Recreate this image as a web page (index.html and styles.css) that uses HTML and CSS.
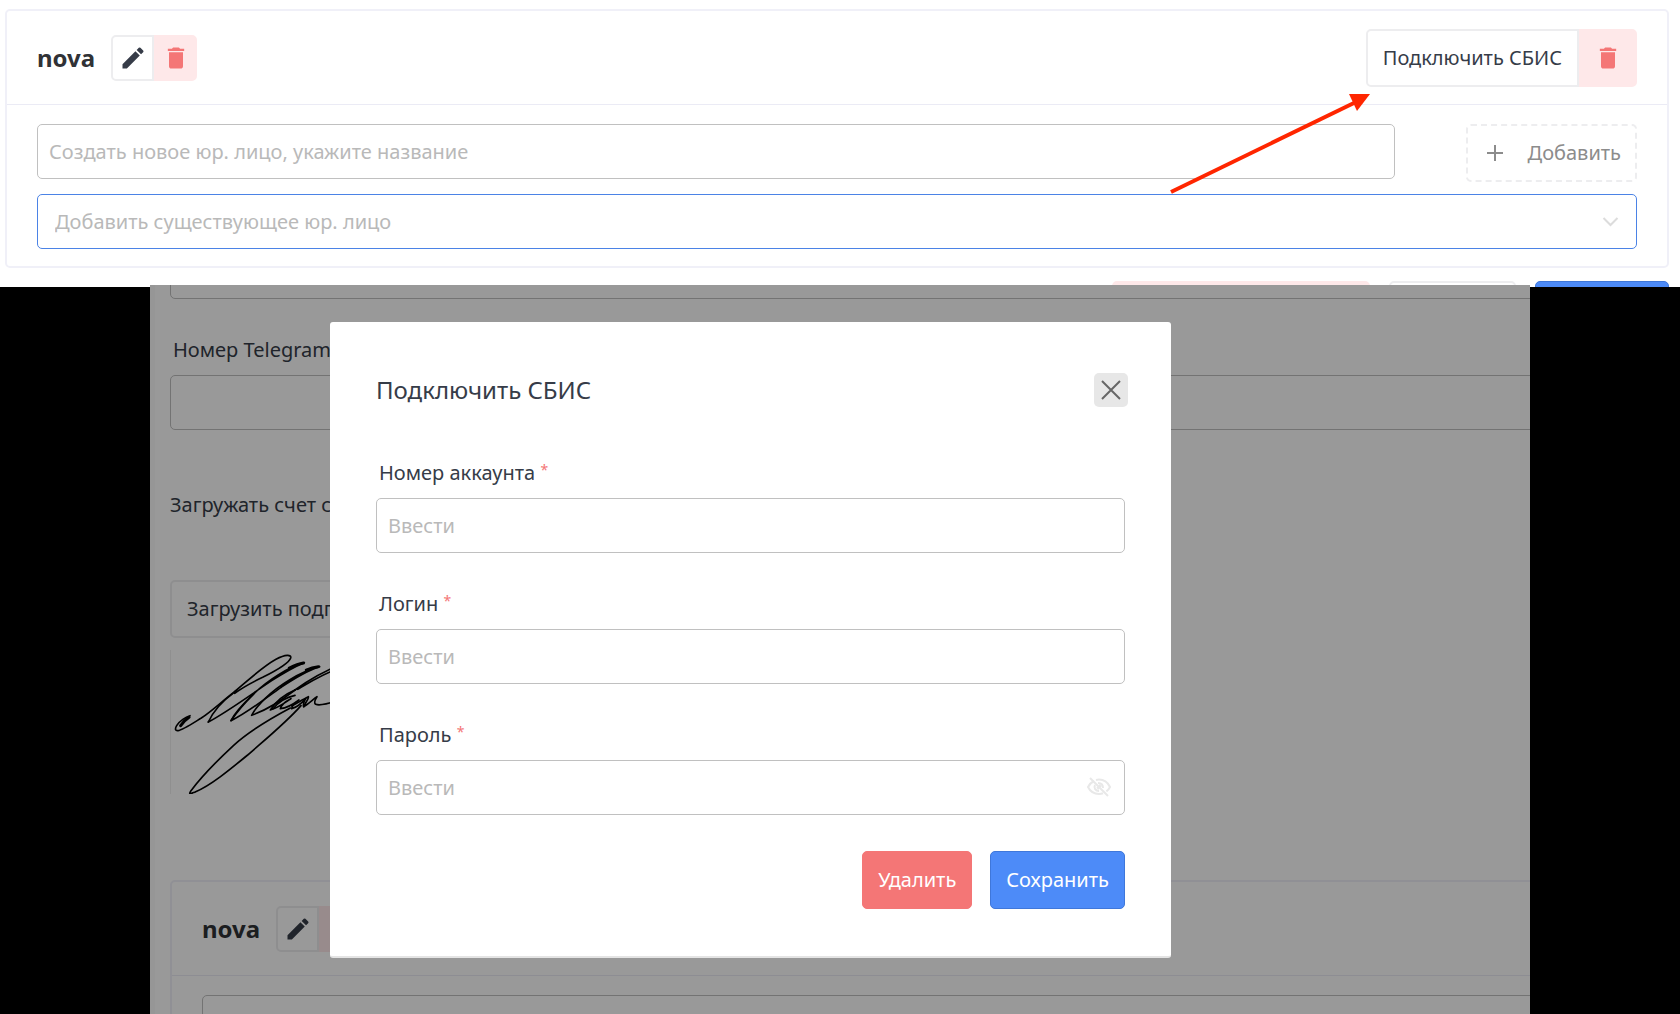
FILE: index.html
```html
<!DOCTYPE html>
<html lang="ru">
<head>
    <meta charset="UTF-8">
    <meta name="viewport" content="width=device-width, initial-scale=1.0">
    <title>Подключить СБИС</title>
    <link rel="stylesheet" href="styles.css">
</head>
<body>
    <!-- Shared icons -->
    <svg class="sprite" aria-hidden="true">
        <symbol id="pencil" viewBox="0 0 24 24">
            <path d="M3 17.25V21h3.75L17.81 9.94l-3.75-3.75L3 17.25zM20.71 7.04a1 1 0 0 0 0-1.41l-2.34-2.34a1 1 0 0 0-1.41 0l-1.83 1.83 3.75 3.75 1.83-1.83z"/>
        </symbol>
        <symbol id="trash" viewBox="0 0 24 24">
            <path d="M6 19c0 1.1.9 2 2 2h8c1.1 0 2-.9 2-2V7H6v12zM19 4h-3.5l-1-1h-5l-1 1H5v2h14V4z"/>
        </symbol>
    </svg>

    <main class="panel">
        <section class="card">
            <header class="card-header">
                <h2>nova</h2>
                <div class="btn-group">
                    <button type="button" class="btn-icon" aria-label="Изменить"><svg><use href="#pencil"/></svg></button>
                    <button type="button" class="btn-icon danger" aria-label="Удалить"><svg><use href="#trash"/></svg></button>
                </div>
                <div class="btn-group right">
                    <button type="button" class="btn">Подключить СБИС</button>
                    <button type="button" class="btn btn-trash danger" aria-label="Отключить СБИС"><svg><use href="#trash"/></svg></button>
                </div>
            </header>
            <div class="card-body">
                <div class="add-row">
                    <input type="text" class="input" aria-label="Новое юр. лицо" placeholder="Создать новое юр. лицо, укажите название">
                    <button type="button" class="btn btn-dashed">
                        <svg viewBox="0 0 18 18"><path d="M9 1v16M1 9h16"/></svg>
                        Добавить
                    </button>
                </div>
                <div class="select-wrap">
                    <select class="input" aria-label="Существующее юр. лицо">
                        <option>Добавить существующее юр. лицо</option>
                    </select>
                    <svg class="chevron" viewBox="0 0 16 10"><path d="M1 1l7 7 7-7"/></svg>
                </div>
            </div>
        </section>
        <footer class="panel-footer">
            <button type="button" class="btn btn-wide danger" aria-label="Удалить"></button>
            <button type="button" class="btn btn-cancel" aria-label="Отмена"></button>
            <button type="button" class="btn btn-primary btn-ok" aria-label="Сохранить"></button>
        </footer>
        <svg class="arrow" viewBox="0 0 204 104" aria-hidden="true">
            <path class="line" d="M3 99L188 9"/>
            <path class="head" d="M181 1h21l-13 17z"/>
        </svg>
    </main>

    <div class="stage">
        <div class="page">
            <input type="text" class="input cut" aria-label="Телефон">
            <div class="field">
                <label for="telegram">Номер Telegram</label>
                <input type="text" class="input" id="telegram">
            </div>
            <p class="note">Загружать счет с подписью</p>
            <button type="button" class="btn">Загрузить подпись</button>
            <div class="signature">
                <svg viewBox="90 270 540 432">
                    <path d="M147 467c-12 4-32 16-40 30-6 10-4 16 4 15 14-2 44-22 70-38 30-20 60-48 96-76 30-24 84-76 128-100 28-15 47-15 44-4-5 16-48 40-84 58-36 17-62 32-84 48"/>
                    <path d="M202 486c14-30 38-60 74-86"/>
                    <path d="M202 486c60-32 130-84 190-124 34-22 64-40 98-54-48 14-110 52-154 96-26 26-48 52-66 78 50-24 102-66 150-100"/>
                    <path d="M270 482c10-20 34-48 66-78"/>
                    <path d="M420 382c36-24 78-50 116-62-60 16-124 56-164 96-20 20-34 36-40 50 40-14 86-42 130-76"/>
                    <path d="M462 390c34-26 80-54 150-82M470 388c40-24 74-46 140-70"/>
                    <path d="M462 390c-34 14-56 32-74 60 22-6 44-22 62-34-20 10-30 20-32 30 20-2 40-14 56-26-12 8-22 18-22 26 18-4 28-14 42-30-8 14-8 20-6 24"/>
                    <path d="M396 446c16-20 38-34 66-40"/>
                    <path d="M452 438c24-12 40-24 50-28 4 4-10 18-14 30 14-8 28-22 40-30-4 8-12 18-4 23 14 5 34-1 60-10"/>
                    <path d="M448 444c-60 32-120 66-170 112-54 50-104 104-128 136-10 16 2 8 14 3 44-18 100-64 156-110 62-54 118-100 160-148"/>
                    <path class="thick" d="M119 497c8-11 16-19 25-25M445 324c14-7 28-13 42-15M496 330c12-6 24-9 36-10"/>
                </svg>
            </div>
            <section class="card">
                <header class="card-header">
                    <h2>nova</h2>
                    <div class="btn-group">
                        <button type="button" class="btn-icon" aria-label="Изменить"><svg><use href="#pencil"/></svg></button>
                        <button type="button" class="btn-icon danger" aria-label="Удалить"><svg><use href="#trash"/></svg></button>
                    </div>
                </header>
                <div class="card-body">
                    <input type="text" class="input" aria-label="Новое юр. лицо">
                </div>
            </section>
        </div>

        <div class="overlay">
            <form class="modal" role="dialog" aria-labelledby="modalTitle">
                <header class="modal-header">
                    <h1 id="modalTitle">Подключить СБИС</h1>
                    <button type="button" class="close" aria-label="Закрыть">
                        <svg viewBox="0 0 20 20"><path d="M1 1l18 18M19 1L1 19"/></svg>
                    </button>
                </header>
                <div class="modal-body">
                    <div class="field">
                        <label for="account">Номер аккаунта <span class="required">*</span></label>
                        <input type="text" class="input" id="account" placeholder="Ввести">
                    </div>
                    <div class="field">
                        <label for="login">Логин <span class="required">*</span></label>
                        <input type="text" class="input" id="login" placeholder="Ввести">
                    </div>
                    <div class="field">
                        <label for="password">Пароль <span class="required">*</span></label>
                        <div class="password-wrap">
                            <input type="password" class="input" id="password" placeholder="Ввести">
                            <svg class="eye" viewBox="0 0 24 20">
                                <path d="M7 4C4 5.500 2 8 1 10c2 4 6 7 11 7 1.500 0 3-.3 4-.7M9 3c1-.3 2-.4 3-.4 5 0 9 3.400 11 7.400-.8 1.600-2 3.200-3.600 4.400"/>
                                <path d="M8 8c-1.500 3 .5 6 4 6M11 6c3 0 5 2 5 5M12 8l2 2M10 10l2 2"/>
                                <path d="M3 1l18 18"/>
                            </svg>
                        </div>
                    </div>
                    <div class="actions">
                        <button type="button" class="btn btn-delete">Удалить</button>
                        <button type="submit" class="btn btn-primary">Сохранить</button>
                    </div>
                </div>
            </form>
        </div>
    </div>
</body>
</html>
```
FILE: styles.css
```css
* {
    box-sizing: border-box;
}

body {
    margin: 0;
    height: 100vh;
    display: flex;
    flex-direction: column;
    overflow: hidden;
    background-color: #000;
    color: #363c48;
    font-family: "Noto Sans", "Open Sans", sans-serif;
    font-size: 20px;
    line-height: 30px;
}

h1, h2, p {
    margin: 0;
}

button, input, select {
    font: inherit;
    color: inherit;
    margin: 0;
}

.sprite {
    position: absolute;
    width: 0;
    height: 0;
}

/* Top panel */
.panel {
    position: relative;
    background-color: #fff;
    padding: 9px 11px 0 5px;
}

.card {
    border: 2px solid #f0f0f8;
    border-radius: 5px;
}

.card-header {
    display: flex;
    align-items: center;
    height: 94px;
    padding: 0 30px;
    border-bottom: 1px solid #ebebf5;
}

.card-header h2 {
    color: #303236;
    font-size: 24px;
    margin-right: 16px;
}

.card-body {
    padding: 19px 30px 17px;
}

.btn-group {
    display: flex;
}

.right {
    margin-left: auto;
}

.btn {
    height: 58px;
    padding: 0 15px;
    border: 2px solid #ededef;
    border-radius: 5px;
    background-color: #fff;
}

.btn-icon {
    display: flex;
    align-items: center;
    justify-content: center;
    width: 43px;
    height: 46px;
    padding: 0;
    border: 2px solid #ededef;
    border-radius: 5px;
    background-color: #fff;
}

.btn-icon svg, .btn-trash svg {
    display: block;
    width: 28px;
    height: 28px;
    fill: currentColor;
}

.btn-trash {
    padding: 0 13px;
}

.btn-group button:first-child {
    border-radius: 5px 0 0 5px;
}

.btn-group button:last-child {
    border-radius: 0 5px 5px 0;
}

.danger {
    border-color: #fee8e9;
    background-color: #fee8e9;
    color: #f47676;
}

.input {
    display: block;
    width: 100%;
    height: 55px;
    padding: 0 11px;
    border: 1px solid #c0c0c0;
    border-radius: 5px;
    outline: 0;
    background-color: #fff;
}

.input::placeholder {
    color: #b9b9b9;
    opacity: 1;
}

.add-row {
    display: flex;
    align-items: flex-start;
    gap: 71px;
    margin-bottom: 12px;
}

.btn-dashed {
    display: flex;
    flex: none;
    align-items: center;
    gap: 24px;
    padding: 0 14px 0 18px;
    border-style: dashed;
    color: #8c8c8c;
}

.btn-dashed svg {
    width: 18px;
    height: 18px;
    fill: none;
    stroke: currentColor;
    stroke-width: 2;
}

.select-wrap, .password-wrap {
    position: relative;
}

.select-wrap .input {
    appearance: none;
    padding: 0 17px;
    border-color: #4b83e6;
    color: #b9b9b9;
}

.chevron {
    position: absolute;
    top: 23px;
    right: 18px;
    width: 17px;
    height: 10px;
    fill: none;
    stroke: #dcdcdc;
    stroke-width: 2;
}

.panel-footer {
    display: flex;
    justify-content: flex-end;
    gap: 19px;
    height: 19px;
    padding-top: 13px;
    overflow: hidden;
}

.btn-wide {
    width: 258px;
}

.btn-cancel {
    width: 127px;
}

.btn-ok {
    width: 134px;
}

.btn-primary {
    border: 1px solid #3f77da;
    background-color: #4d8bf8;
    color: #fff;
}

.btn-delete {
    border: 1px solid #f47676;
    background-color: #f47676;
    color: #fff;
}

.arrow {
    position: absolute;
    top: 93px;
    right: 308px;
    width: 204px;
    height: 104px;
}

.arrow .line {
    fill: none;
    stroke: #ff2600;
    stroke-width: 4;
}

.arrow .head {
    fill: #ff2600;
}

/* Dimmed page with the dialog */
.stage {
    position: relative;
    flex: 1;
    min-height: 0;
    margin: -2px 150px 0;
    overflow: hidden;
    background-color: #fff;
}

.page {
    width: 105%;
    padding-left: 15px;
    border-left: 5px solid #fafafa;
}

.cut {
    margin-top: -41px;
}

.field {
    margin-bottom: 36px;
}

.field label {
    display: block;
    margin-bottom: 10px;
    padding-left: 3px;
}

.page .field {
    margin-top: 36px;
    margin-bottom: 60px;
}

.note {
    margin-bottom: 60px;
}

.signature {
    height: 144px;
    margin: 12px 0 86px;
    border-left: 1px solid #efefef;
}

.signature svg {
    display: block;
    width: 180px;
    height: 144px;
    fill: none;
    stroke: #000;
    stroke-width: 5;
    stroke-linecap: round;
    stroke-linejoin: round;
}

.signature .thick {
    stroke-width: 9;
}

.overlay {
    position: absolute;
    inset: 0;
    padding: 37px 359px 0 180px;
    background-color: rgba(0, 0, 0, 0.4);
}

.modal {
    border-bottom: 2px solid #e4e4e4;
    border-radius: 3px;
    background-color: #fff;
}

.modal-header {
    display: flex;
    align-items: center;
    justify-content: space-between;
    padding: 51px 43px 51px 46px;
}

.modal-header h1 {
    font-size: 24px;
    font-weight: 400;
    line-height: 34px;
}

.close {
    display: flex;
    align-items: center;
    justify-content: center;
    width: 34px;
    height: 34px;
    padding: 0;
    border: 0;
    border-radius: 5px;
    background-color: #e7e7e7;
}

.close svg {
    width: 20px;
    height: 20px;
    stroke: #666;
    stroke-width: 2;
}

.modal-body {
    padding: 0 46px 47px;
}

.required {
    color: #f47676;
    font-size: 14px;
    vertical-align: top;
    line-height: 24px;
}

.eye {
    position: absolute;
    top: 17px;
    right: 14px;
    width: 24px;
    height: 20px;
    fill: none;
    stroke: #e8e8e8;
    stroke-width: 2;
}

.actions {
    display: flex;
    justify-content: flex-end;
    gap: 18px;
}
```
